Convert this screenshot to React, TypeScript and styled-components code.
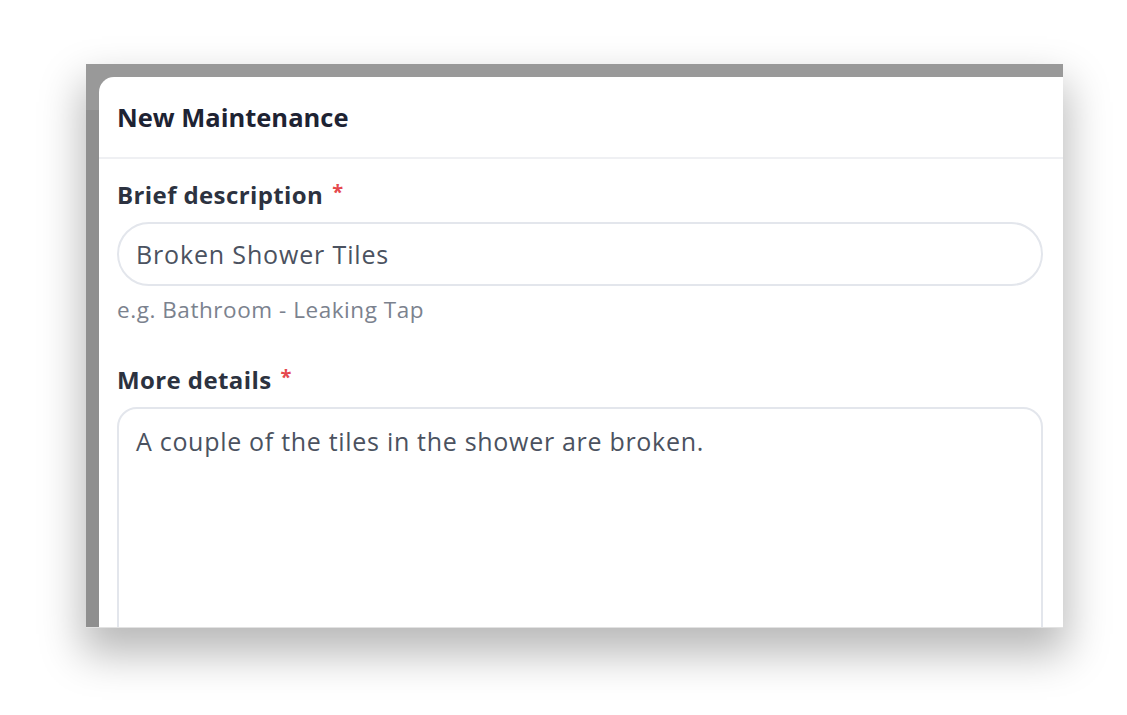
import React from "react";
import styled, { createGlobalStyle } from "styled-components";

const Global = createGlobalStyle`
  html, body { margin: 0; padding: 0; background: #ffffff; }
  body { font-family: "Open Sans", "Noto Sans", sans-serif; overflow: hidden; }
  * { box-sizing: border-box; }
`;

const Stage = styled.div`
  width: 1127px;
  height: 715px;
  padding: 64px 0 0 86px;
  background: #ffffff;
`;

const Frame = styled.div`
  width: 977px;
  height: 564px;
  display: flex;
  padding: 13px 0 0 13px;
  background: linear-gradient(#999999 0 46px, #8f8f8f 46px);
  border-bottom: 1px solid #e2e2e2;
  box-shadow: 0 22px 40px 4px rgba(0, 0, 0, 0.28);
`;

const Card = styled.div`
  flex: 1;
  min-height: 0;
  background: #ffffff;
  border-top-left-radius: 15px;
  overflow: hidden;
  display: flex;
  flex-direction: column;
`;

const Header = styled.div`
  flex-shrink: 0;
  height: 82px;
  display: flex;
  align-items: center;
  padding: 0 18px;
  border-bottom: 2px solid #eff0f3;
`;

const Title = styled.h1`
  margin: 0;
  font-size: 25.5px;
  font-weight: 700;
  color: #1e2333;
`;

const Body = styled.div`
  flex-shrink: 0;
  padding: 19px 20px 0 18px;
  display: flex;
  flex-direction: column;
`;

const Field = styled.div<{ $gap?: number }>`
  display: flex;
  flex-direction: column;
  margin-bottom: ${(p) => p.$gap ?? 0}px;
`;

const Label = styled.label`
  font-size: 24px;
  font-weight: 700;
  color: #2c3240;
  line-height: 34px;
  letter-spacing: 0.4px;
  margin-bottom: 10px;
`;

const Star = styled.span`
  color: #e5484d;
  font-size: 20px;
  vertical-align: top;
  margin-left: 9px;
  line-height: 28px;
`;

const TextInput = styled.input`
  flex-shrink: 0;
  height: 64px;
  border: 2px solid #e3e6ec;
  border-radius: 32px;
  padding: 0 17px;
  font-family: inherit;
  font-size: 25px;
  letter-spacing: 0.85px;
  color: #4b5260;
  outline: none;
  background: #fff;
`;

const Hint = styled.div`
  margin-top: 9px;
  font-size: 22.5px;
  letter-spacing: 0.55px;
  color: #7b828e;
  line-height: 30px;
`;

const TextArea = styled.textarea`
  flex-shrink: 0;
  height: 260px;
  border: 2px solid #e3e6ec;
  border-radius: 20px;
  padding: 15px 17px;
  font-family: inherit;
  font-size: 25px;
  letter-spacing: 0.7px;
  color: #4b5260;
  outline: none;
  resize: none;
  background: #fff;
  line-height: 34px;
  overflow: hidden;
`;

export default function App() {
  return (
    <>
      <Global />
      <Stage>
        <Frame>
          <Card>
            <Header>
              <Title>New Maintenance</Title>
            </Header>
            <Body>
              <Field $gap={38}>
                <Label>
                  Brief description<Star>*</Star>
                </Label>
                <TextInput readOnly value="Broken Shower Tiles" />
                <Hint>e.g. Bathroom - Leaking Tap</Hint>
              </Field>
              <Field>
                <Label>
                  More details<Star>*</Star>
                </Label>
                <TextArea readOnly value="A couple of the tiles in the shower are broken." />
              </Field>
            </Body>
          </Card>
        </Frame>
      </Stage>
    </>
  );
}
